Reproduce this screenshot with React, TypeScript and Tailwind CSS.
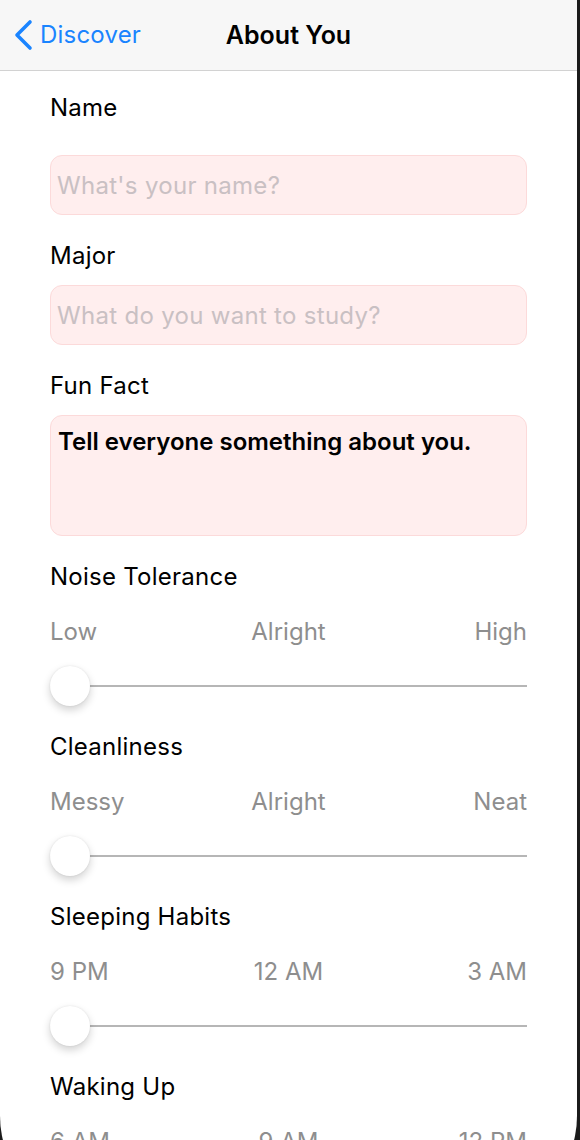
import React from 'react';

const FONT = { fontFamily: 'Inter, "Noto Sans", "Liberation Sans", sans-serif' };

type Scale = {
  title: string;
  marks: [string, string, string];
};

const scales: Scale[] = [
  { title: 'Noise Tolerance', marks: ['Low', 'Alright', 'High'] },
  { title: 'Cleanliness', marks: ['Messy', 'Alright', 'Neat'] },
  { title: 'Sleeping Habits', marks: ['9 PM', '12 AM', '3 AM'] },
  { title: 'Waking Up', marks: ['6 AM', '9 AM', '12 PM'] },
];

// Field label above inputs and sliders
function Label({ children, className = '' }: { children: React.ReactNode; className?: string }) {
  return <div className={`text-[24px] leading-[28px] tracking-[0.25px] text-black ${className}`}>{children}</div>;
}

function TextField({ placeholder }: { placeholder: string }) {
  return (
    <input
      type="text"
      placeholder={placeholder}
      className="h-[60px] w-full rounded-[12px] border border-[#fcdada] bg-[#ffeeee] px-[6px] text-[24px] tracking-[0.3px] text-black outline-none placeholder:text-[#c9c0c3]"
      style={FONT}
    />
  );
}

function ScaleSlider({ scale }: { scale: Scale }) {
  return (
    <div className="mt-[27px]">
      <Label>{scale.title}</Label>
      <div className="mt-[27px] flex h-[28px] items-center justify-between text-[24px] leading-[28px] text-[#8e8e8e]">
        <span className="w-[120px]">{scale.marks[0]}</span>
        <span>{scale.marks[1]}</span>
        <span className="w-[120px] text-right">{scale.marks[2]}</span>
      </div>
      <div className="relative mt-[20px] h-[40px]">
        <div className="absolute left-0 right-0 top-[19px] h-[2px] bg-[#b6b6b6]" />
        <div className="absolute left-0 top-0 h-[40px] w-[40px] rounded-full bg-white shadow-[0_4px_8px_rgba(0,0,0,0.18),0_0_2px_rgba(0,0,0,0.1)]" />
      </div>
    </div>
  );
}

export default function App() {
  return (
    <div className="h-[1140px] w-[580px] overflow-hidden bg-[#1b1b1b]" style={FONT}>
      <div className="min-h-[1216px] w-[577px] overflow-hidden rounded-b-[100px] bg-white">
        {/* Navigation bar */}
        <div className="relative flex h-[71px] items-center border-b border-[#d2d2d2] bg-[#f7f7f7]">
          <div className="flex items-center pl-[13px] text-[#1a84ff]">
            <svg width="20" height="32" viewBox="0 0 20 32" fill="none">
              <path d="M17 3 L4 16 L17 29" stroke="currentColor" strokeWidth="3.6" strokeLinecap="round" strokeLinejoin="round" />
            </svg>
            <span className="ml-[7px] text-[24px] leading-[30px] tracking-[0.2px]">Discover</span>
          </div>
          <div className="absolute left-0 right-0 text-center text-[25px] font-semibold leading-[30px] text-black">
            About You
          </div>
        </div>

        <div className="px-[50px]">
          <Label className="mt-[23px]">Name</Label>
          <div className="mt-[33px]">
            <TextField placeholder="What's your name?" />
          </div>

          <Label className="mt-[27px]">Major</Label>
          <div className="mt-[15px]">
            <TextField placeholder="What do you want to study?" />
          </div>

          <Label className="mt-[27px]">Fun Fact</Label>
          <div className="mt-[15px] h-[121px] rounded-[12px] border border-[#fcdada] bg-[#ffeeee] px-[7px] pt-[12px] text-[24px] font-semibold leading-[28px] text-black">
            Tell everyone something about you.
          </div>

          {scales.map((s) => (
            <ScaleSlider key={s.title} scale={s} />
          ))}
        </div>
      </div>
    </div>
  );
}
